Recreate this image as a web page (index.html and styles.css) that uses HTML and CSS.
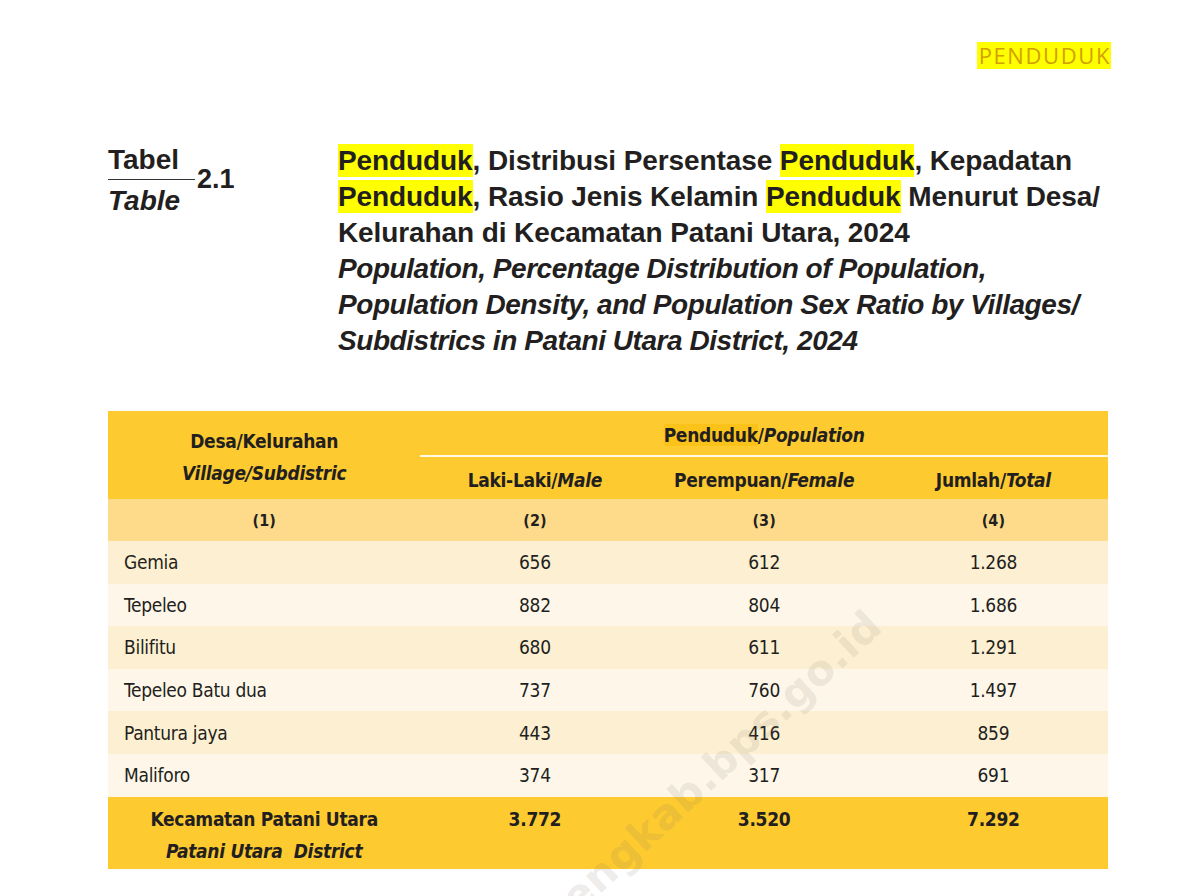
FILE: index.html
```html
<!DOCTYPE html>
<html lang="id">
<head>
<meta charset="utf-8">
<title>Tabel 2.1 Penduduk</title>
<link rel="stylesheet" href="styles.css">
</head>
<body>
<div class="page">
  <div class="topbar"><span class="chapter">PENDUDUK</span></div>

  <div class="caption">
    <div class="label">
      <div class="label-words">
        <span class="label-id">Tabel</span>
        <span class="label-en">Table</span>
      </div>
      <span class="label-num">2.1</span>
    </div>
    <div class="title">
      <p class="title-id"><mark>Penduduk</mark>, Distribusi Persentase <mark>Penduduk</mark>, Kepadatan<br><mark>Penduduk</mark>, Rasio Jenis Kelamin <mark>Penduduk</mark> Menurut Desa/<br>Kelurahan di Kecamatan Patani Utara, 2024</p>
      <p class="title-en">Population, Percentage Distribution of Population,<br>Population Density, and Population Sex Ratio by Villages/<br>Subdistrics in Patani Utara District, 2024</p>
    </div>
  </div>

  <table class="data">
    <colgroup>
      <col class="c-name"><col class="c-num"><col class="c-num"><col class="c-num">
    </colgroup>
    <thead>
      <tr class="h1">
        <th rowspan="2" class="h-name">Desa/Kelurahan<br><em>Village/Subdistric</em></th>
        <th colspan="3" class="h-group"><span class="hl">Penduduk</span>/<em>Population</em></th>
      </tr>
      <tr class="h2">
        <th>Laki-Laki/<em>Male</em></th>
        <th>Perempuan/<em>Female</em></th>
        <th>Jumlah/<em>Total</em></th>
      </tr>
      <tr class="h3">
        <th>(1)</th><th>(2)</th><th>(3)</th><th>(4)</th>
      </tr>
    </thead>
    <tbody>
      <tr class="odd"><td class="name">Gemia</td><td>656</td><td>612</td><td>1.268</td></tr>
      <tr class="even"><td class="name">Tepeleo</td><td>882</td><td>804</td><td>1.686</td></tr>
      <tr class="odd"><td class="name">Bilifitu</td><td>680</td><td>611</td><td>1.291</td></tr>
      <tr class="even"><td class="name">Tepeleo Batu dua</td><td>737</td><td>760</td><td>1.497</td></tr>
      <tr class="odd"><td class="name">Pantura jaya</td><td>443</td><td>416</td><td>859</td></tr>
      <tr class="even"><td class="name">Maliforo</td><td>374</td><td>317</td><td>691</td></tr>
    </tbody>
    <tfoot>
      <tr class="total">
        <td class="t-name">Kecamatan Patani Utara<br><em>Patani Utara&nbsp; District</em></td>
        <td>3.772</td><td>3.520</td><td>7.292</td>
      </tr>
    </tfoot>
  </table>

  <div class="watermark">haltengkab.bps.go.id</div>
</div>
</body>
</html>
```
FILE: styles.css
```css
html, body {
  margin: 0;
  padding: 0;
  background: #ffffff;
}
body {
  width: 1183px;
  height: 896px;
  overflow: hidden;
  color: #231f20;
  font-family: "Liberation Sans", Arial, sans-serif;
}
.page {
  position: relative;
  height: 896px;
  overflow: hidden;
}
.topbar {
  display: flex;
  justify-content: flex-end;
  padding: 42px 72px 0 0;
  height: 27px;
}
.chapter {
  display: block;
  background: #ffff00;
  color: #d2a000;
  font-family: "Open Sans", sans-serif;
  font-weight: 400;
  font-size: 22px;
  line-height: 27px;
  padding: 0 0 0 2px;
  letter-spacing: 1.6px;
}

.caption {
  display: flex;
  padding: 74px 0 0 108px;
}
.label {
  width: 230px;
  display: flex;
  align-items: flex-start;
  margin-top: 2px;
}
.label-words {
  display: flex;
  flex-direction: column;
  width: 87px;
}
.label-id {
  font-weight: 700;
  font-size: 28px;
  line-height: 30px;
  border-bottom: 1.5px solid #333;
  padding-bottom: 4px;
}
.label-en {
  font-weight: 700;
  font-style: italic;
  font-size: 28px;
  line-height: 40px;
  padding-top: 1px;
}
.label-num {
  font-weight: 700;
  font-size: 27px;
  margin-left: 2px;
  margin-top: 19px;
}
.title {
  width: 790px;
}
.title p {
  margin: 0;
  font-size: 28px;
  line-height: 36px;
  font-weight: 700;
  letter-spacing: -0.1px;
  white-space: nowrap;
}
.title-en {
  font-style: italic;
  letter-spacing: -0.45px !important;
}
mark {
  background: #ffff00;
  color: inherit;
  padding: 1px 0;
}

.data {
  margin: 52px 0 0 108px;
  width: 1000px;
  border-collapse: collapse;
  font-family: "DejaVu Sans Condensed", "DejaVu Sans", sans-serif;
  font-stretch: condensed;
  font-size: 19px;
  letter-spacing: -0.3px;
  color: #231f20;
}
.c-name { width: 312px; }
.c-num { width: 229px; }
.data th, .data td {
  padding: 0;
  text-align: center;
}
.data th {
  font-weight: 700;
}
.data em { font-style: italic; }
.h1 { height: 45px; }
.h1 th { background: #fdca30; }
.h-name {
  line-height: 32px;
  vertical-align: middle;
  padding-top: 4px !important;
}
.h-group {
  border-bottom: 2px solid #fffbe8;
  vertical-align: middle;
  padding-top: 4px !important;
}
.hl {
  background: #fbc21a;
}
.h2 { height: 43px; }
.h2 th { background: #fdca30; padding-top: 3px; }
.h3 { height: 42px; }
.h3 th {
  background: #fddb8a;
  font-size: 16px;
  letter-spacing: 0;
}
tbody tr { height: 42.6px; }
.odd td { background: #fdf0d2; }
.even td { background: #fef7e9; }
td.name {
  text-align: left;
  padding-left: 16px;
}
.total td {
  background: #fdca30;
  font-weight: 700;
  vertical-align: top;
  padding-top: 6px;
  line-height: 32px;
  height: 66px;
}
.total em { font-style: italic; }

.watermark {
  position: absolute;
  right: 308px;
  top: 594px;
  line-height: 50px;
  transform-origin: right center;
  transform: rotate(-43deg);
  font-family: "DejaVu Sans", sans-serif;
  font-weight: 700;
  font-size: 42px;
  letter-spacing: 0.5px;
  color: rgba(120, 115, 110, 0.15);
  white-space: nowrap;
  pointer-events: none;
}
```
